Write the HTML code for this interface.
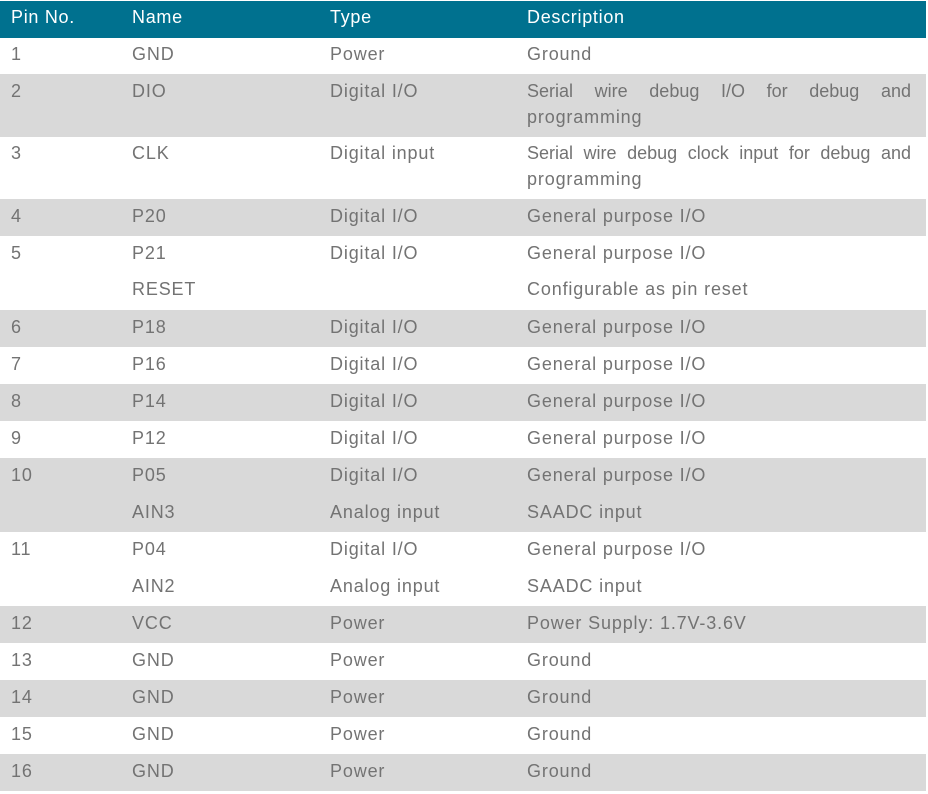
<!DOCTYPE html>
<html><head><style>
body{margin:0;width:928px;height:794px;background:#fff;position:relative;overflow:hidden;font-family:"Liberation Sans",sans-serif;font-size:18px;letter-spacing:0.85px;color:#737373}
.b{position:absolute;left:0;width:926px}
.g{background:#d9d9d9}
.h{background:#00718f;top:1px;height:37px}
.t{position:absolute;white-space:nowrap;line-height:20px}
.w{color:#fff;font-size:18px;letter-spacing:0.7px}
.j{text-align:justify;text-align-last:justify;width:384px;letter-spacing:0}
</style></head><body>
<div class="b h"></div>
<div class="b g" style="top:74px;height:63px"></div>
<div class="b g" style="top:199px;height:37px"></div>
<div class="b g" style="top:310px;height:37px"></div>
<div class="b g" style="top:384px;height:37px"></div>
<div class="b g" style="top:458px;height:74px"></div>
<div class="b g" style="top:606px;height:37px"></div>
<div class="b g" style="top:680px;height:37px"></div>
<div class="b g" style="top:754px;height:37px"></div>

<div class="t w" style="left:11px;top:7px">Pin No.</div>
<div class="t w" style="left:132px;top:7px">Name</div>
<div class="t w" style="left:330px;top:7px">Type</div>
<div class="t w" style="left:527px;top:7px">Description</div>

<div class="t" style="left:11px;top:44px">1</div><div class="t" style="left:132px;top:44px">GND</div><div class="t" style="left:330px;top:44px">Power</div><div class="t" style="left:527px;top:44px">Ground</div>

<div class="t" style="left:11px;top:81px">2</div><div class="t" style="left:132px;top:81px">DIO</div><div class="t" style="left:330px;top:81px">Digital I/O</div><div class="t j" style="left:527px;top:81px">Serial wire debug I/O for debug and</div><div class="t" style="left:527px;top:107px">programming</div>

<div class="t" style="left:11px;top:143px">3</div><div class="t" style="left:132px;top:143px">CLK</div><div class="t" style="left:330px;top:143px">Digital input</div><div class="t j" style="left:527px;top:143px;word-spacing:0">Serial wire debug clock input for debug and</div><div class="t" style="left:527px;top:169px">programming</div>

<div class="t" style="left:11px;top:206px">4</div><div class="t" style="left:132px;top:206px">P20</div><div class="t" style="left:330px;top:206px">Digital I/O</div><div class="t" style="left:527px;top:206px">General purpose I/O</div>

<div class="t" style="left:11px;top:243px">5</div><div class="t" style="left:132px;top:243px">P21</div><div class="t" style="left:330px;top:243px">Digital I/O</div><div class="t" style="left:527px;top:243px">General purpose I/O</div>
<div class="t" style="left:132px;top:279px">RESET</div><div class="t" style="left:527px;top:279px">Configurable as pin reset</div>

<div class="t" style="left:11px;top:317px">6</div><div class="t" style="left:132px;top:317px">P18</div><div class="t" style="left:330px;top:317px">Digital I/O</div><div class="t" style="left:527px;top:317px">General purpose I/O</div>
<div class="t" style="left:11px;top:354px">7</div><div class="t" style="left:132px;top:354px">P16</div><div class="t" style="left:330px;top:354px">Digital I/O</div><div class="t" style="left:527px;top:354px">General purpose I/O</div>
<div class="t" style="left:11px;top:391px">8</div><div class="t" style="left:132px;top:391px">P14</div><div class="t" style="left:330px;top:391px">Digital I/O</div><div class="t" style="left:527px;top:391px">General purpose I/O</div>
<div class="t" style="left:11px;top:428px">9</div><div class="t" style="left:132px;top:428px">P12</div><div class="t" style="left:330px;top:428px">Digital I/O</div><div class="t" style="left:527px;top:428px">General purpose I/O</div>

<div class="t" style="left:11px;top:465px">10</div><div class="t" style="left:132px;top:465px">P05</div><div class="t" style="left:330px;top:465px">Digital I/O</div><div class="t" style="left:527px;top:465px">General purpose I/O</div>
<div class="t" style="left:132px;top:502px">AIN3</div><div class="t" style="left:330px;top:502px">Analog input</div><div class="t" style="left:527px;top:502px">SAADC input</div>

<div class="t" style="left:11px;top:539px">11</div><div class="t" style="left:132px;top:539px">P04</div><div class="t" style="left:330px;top:539px">Digital I/O</div><div class="t" style="left:527px;top:539px">General purpose I/O</div>
<div class="t" style="left:132px;top:576px">AIN2</div><div class="t" style="left:330px;top:576px">Analog input</div><div class="t" style="left:527px;top:576px">SAADC input</div>

<div class="t" style="left:11px;top:613px">12</div><div class="t" style="left:132px;top:613px">VCC</div><div class="t" style="left:330px;top:613px">Power</div><div class="t" style="left:527px;top:613px">Power Supply: 1.7V-3.6V</div>
<div class="t" style="left:11px;top:650px">13</div><div class="t" style="left:132px;top:650px">GND</div><div class="t" style="left:330px;top:650px">Power</div><div class="t" style="left:527px;top:650px">Ground</div>
<div class="t" style="left:11px;top:687px">14</div><div class="t" style="left:132px;top:687px">GND</div><div class="t" style="left:330px;top:687px">Power</div><div class="t" style="left:527px;top:687px">Ground</div>
<div class="t" style="left:11px;top:724px">15</div><div class="t" style="left:132px;top:724px">GND</div><div class="t" style="left:330px;top:724px">Power</div><div class="t" style="left:527px;top:724px">Ground</div>
<div class="t" style="left:11px;top:761px">16</div><div class="t" style="left:132px;top:761px">GND</div><div class="t" style="left:330px;top:761px">Power</div><div class="t" style="left:527px;top:761px">Ground</div>
</body></html>
